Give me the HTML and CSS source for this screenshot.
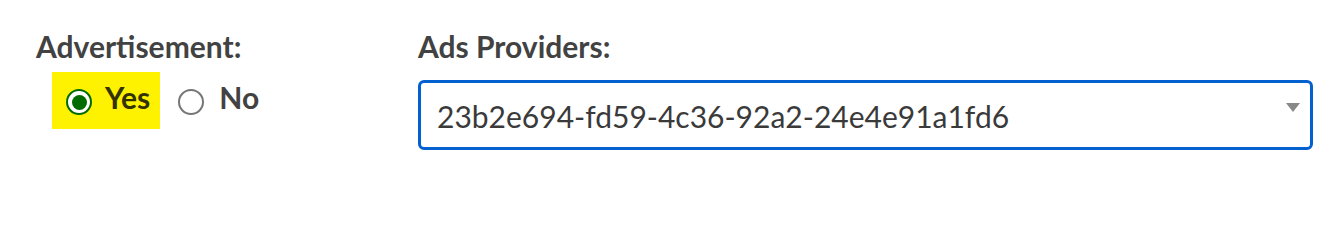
FILE: index.html
```html
<!DOCTYPE html>
<html>
<head>
<meta charset="utf-8">
<link rel="stylesheet" href="styles.css">
</head>
<body>
<div class="form">
  <div class="col col-left">
    <div class="label">Advertisement:</div>
    <div class="radios">
      <label class="opt opt-hl"><span class="radio radio-on"><span class="dot"></span></span><span class="opt-text">Yes</span></label>
      <label class="opt"><span class="radio"></span><span class="opt-text">No</span></label>
    </div>
  </div>
  <div class="col col-right">
    <div class="label">Ads Providers:</div>
    <div class="select">
      <span class="select-value">23b2e694-fd59-4c36-92a2-24e4e91a1fd6</span>
      <span class="arrow"></span>
    </div>
  </div>
</div>
</body>
</html>
```
FILE: styles.css
```css
html, body {
  margin: 0;
  padding: 0;
  background: #ffffff;
}
body {
  font-family: Lato, "Open Sans", sans-serif;
  color: #424242;
}
.form {
  display: flex;
  padding: 28px 0 0 36px;
}
.col-left {
  width: 382px;
}
.col-right {
  width: 895px;
}
.label {
  font-size: 30px;
  font-weight: 700;
  line-height: 36px;
}
.radios {
  display: flex;
  margin-top: 8px;
  padding-left: 16px;
}
.opt {
  display: flex;
  align-items: flex-start;
  padding: 7px 0 14px 0;
  font-size: 30px;
  font-weight: 700;
  line-height: 36px;
}
.opt-hl {
  background: #fff200;
  padding-left: 14px;
  padding-right: 10px;
  color: #333300;
}
.opt + .opt {
  margin-left: 18px;
}
.radio {
  box-sizing: border-box;
  width: 26px;
  height: 26px;
  margin-top: 10px;
  border: 2px solid #767676;
  border-radius: 50%;
  background: #ffffff;
  display: flex;
  align-items: center;
  justify-content: center;
  margin-right: 15px;
}
.radio-on {
  border: 2.5px solid #006b00;
  margin-right: 13px;
}
.dot {
  width: 15px;
  height: 15px;
  border-radius: 50%;
  background: #006b00;
}
.select {
  box-sizing: border-box;
  margin-top: 16px;
  height: 70px;
  border: 3px solid #0361cf;
  border-radius: 6px;
  padding: 15px 0 0 16px;
  display: flex;
  justify-content: space-between;
  align-items: flex-start;
}
.select-value {
  font-size: 30px;
  font-weight: 400;
  line-height: 36px;
  color: #3a3a3a;
}
.arrow {
  width: 0;
  height: 0;
  margin-top: 5px;
  margin-right: 10px;
  border-left: 7.5px solid transparent;
  border-right: 7.5px solid transparent;
  border-top: 9px solid #888888;
}
```
